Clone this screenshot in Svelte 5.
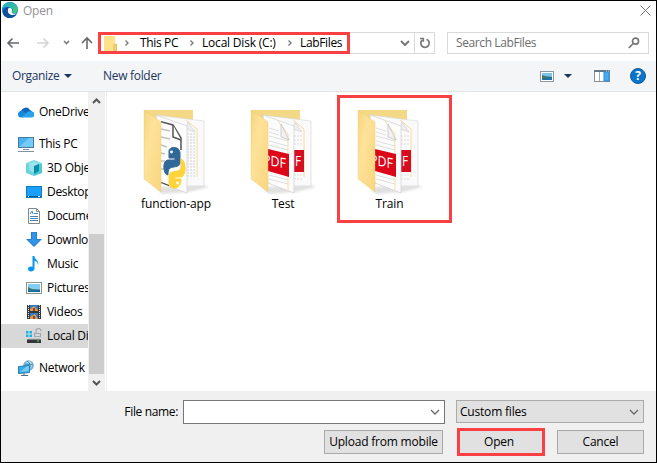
<script>
  const places = [
    { icon: 'onedrive', label: 'OneDrive', top: true },
    { icon: 'pc', label: 'This PC', top: true, gap: true },
    { icon: 'cube', label: '3D Objects' },
    { icon: 'desktop', label: 'Desktop' },
    { icon: 'document', label: 'Documents' },
    { icon: 'download', label: 'Downloads' },
    { icon: 'music', label: 'Music' },
    { icon: 'picture', label: 'Pictures' },
    { icon: 'video', label: 'Videos' },
    { icon: 'disk', label: 'Local Disk', selected: true },
    { icon: 'network', label: 'Network', top: true, gap: true }
  ];
  const crumbs = ['This PC', 'Local Disk (C:)', 'LabFiles'];
  const folders = [
    { name: 'function-app', kind: 'python' },
    { name: 'Test', kind: 'pdf' },
    { name: 'Train', kind: 'pdf', marked: true }
  ];
</script>

{#snippet placeIcon(name)}
  <svg class="pi" viewBox="0 0 16 16">
    {#if name === 'onedrive'}
      <path d="M3 7a5 5 0 0 1 9-1 4 4 0 0 1 2 6L4 9z" fill="#0f68be" />
      <path d="M0 10a3.500 3.500 0 0 1 5-3l7 5-9 1.500A3.300 3.300 0 0 1 0 10z" fill="#1787d9" />
      <path d="M3 13.500 10 7.500a4 4 0 0 1 3 0 3 3 0 0 1 1 6z" fill="#29a4ea" />
    {:else if name === 'pc'}
      <rect x=".5" y="1.500" width="15" height="10" fill="#48b3ed" stroke="#477b9f" />
      <path d="M1 11 11 2h4v9z" fill="#75cbf7" />
      <path d="M5 13.500h6M0 15.500h16" stroke="#7f93a5" />
    {:else if name === 'cube'}
      <path d="M0 3 8 0l8 3-8 3z" fill="#84dce5" />
      <path d="m0 3 8 3v10l-8-3z" fill="#6cd3de" />
      <path d="m16 3-8 3v10l8-3z" fill="#4fc8d6" />
      <path d="m3 4 5-2 5 2-5 2v7l-5-3z" fill="#b3eff3" opacity=".55" />
      <path d="m8 6 5-2v7l-5 3z" fill="#078da6" />
    {:else if name === 'desktop'}
      <rect x=".5" y="2.500" width="15" height="11" fill="#18a0fb" stroke="#147bc2" />
      <path d="M1 12.500h14" stroke="#075e9d" /><path d="M2 12.500h1m9 0h2" stroke="#fff" />
    {:else if name === 'document'}
      <path d="M2.500.5h8l3 3v12h-11z" fill="#fff" stroke="#85898c" /><path d="M10.500.5v3h3" fill="none" stroke="#85898c" />
      <path d="m4 6 2-3 1 3m1-.5h4m-8 3h8m-8 2h8m-8 2h8" fill="none" stroke="#398bc8" /><path d="M8 8.500h4m-4 4h4" stroke="#65727b" />
    {:else if name === 'download'}
      <path d="M5 0h6v7h5l-8 8-8-8h5z" fill="#3294e6" /><path d="M5.500 0h5v7.500h4.300L8 14.200 1.200 7.500h4.300z" fill="none" stroke="#1979ca" stroke-width=".7" />
    {:else if name === 'music'}
      <path d="M6.500 0h2c0 4 5 4 3.500 9-.2-3-1.500-3.700-3.500-4v7.500C8.500 16 2 16.500 2 13c0-2.500 3-3 4.500-2z" fill="#0997ee" />
    {:else if name === 'picture'}
      <rect x=".5" y="2.500" width="15" height="11" fill="#fff" stroke="#8b949a" /><path d="M2 4h12v8H2z" fill="#82cdf0" /><path d="m2 7 4 2 8 .5V12H2z" fill="#367b7c" /><path d="m2 11 12-1v2H2z" fill="#1468a6" />
    {:else if name === 'video'}
      <path d="M1 1h14v14H1z" fill="#35393d" /><path d="M4 1h8v6H4zm0 8h8v6H4z" fill="#327dc6" /><path d="M4 5 8 2l4 4v1H4zm0 8 5-3 3 5H4z" fill="#df9b42" /><path d="M7 4h2v3H7zm0 8h2v3H7z" fill="#8d4240" /><path d="M2.500 1v14m11-14v14" stroke="#eee" stroke-dasharray="1 1" />
    {:else if name === 'disk'}
      <path d="M0 3h2.500v2.500H0zm3.500 0H6v2.500H3.500zM0 6.500h2.500V9H0zm3.500 0H6V9H3.500z" fill="#14b4e9" /><path d="M3 10h10l2 1.500H1z" fill="#c1c5c7" /><rect x="1" y="11.500" width="14" height="3.500" fill="#343739" /><path d="M11 13h2" stroke="#54e264" /><path d="M10 5V3a2.500 2.500 0 0 1 5 0M8.500 5.500h6v3h-6z" fill="none" stroke="#a0a9ae" stroke-width="1.200" />
    {:else}
      <circle cx="10.500" cy="5.500" r="5.300" fill="#76add0" /><path d="m7 2 5-1 3 4-3 4-1-5z" fill="#b6dfed" /><path d="M9 1c4 2 4 7 1 9M6 6c3-2 6-2 9-1" fill="none" stroke="#3b87b9" /><path d="M.5 6.500 11.500 5.500v7L.5 13.500z" fill="#39ace5" stroke="#287faf" /><path d="M2 12 9 6h2v5z" fill="#74caf4" /><path d="M6 13v2M3 15.500h7" stroke="#506b82" />
    {/if}
  </svg>
{/snippet}

{#snippet chevron()}<svg class="chev" viewBox="0 0 6 6"><path d="m1.500.5 2.500 2.500-2.500 2.500" /></svg>{/snippet}
{#snippet down()}<svg class="down" viewBox="0 0 10 6"><path d="m1 1 4 4 4-4" /></svg>{/snippet}

<div class="dialog">
  <header>
    <svg width="16" height="16" viewBox="0 0 16 16">
      <defs><linearGradient id="edge" x2="1" y2="1"><stop stop-color="#22a9dd" /><stop offset="1" stop-color="#47ce69" /></linearGradient></defs>
      <circle cx="8" cy="8" r="8" fill="#0875c9" /><path d="M0 7C1-1 14-3 16 7c0 5-5 5-6 3 3-4-5-8-10-3z" fill="url(#edge)" /><path d="M6 5c-7 1-7 9 0 11 4 .5 7-2 8.500-4C10 14 5 11 6 7z" fill="#104f9a" /><path d="M6 8c0-4 5-2 4 1-1 2 1 4 5 2l-1 1C9 15 5 11 6 8z" fill="#fff" />
    </svg>
    <span>Open</span>
    <svg class="close" width="11" height="11" viewBox="0 0 11 11"><path d="m.5.5 10 10m0-10-10 10" /></svg>
  </header>

  <nav class="address-row">
    <div class="arrows">
      <svg width="86" height="14" viewBox="0 0 86 14" fill="none" stroke-width="1.600">
        <path d="M13 7H2m4.500-4.500L2 7l4.500 4.500" stroke="#66696c" /><path d="M31 7h11m-4.500-4.500L42 7l-4.500 4.500" stroke="#d5d5d5" /><path d="m58 5 2.500 2.500L63 5" stroke="#77797b" /><path d="M81 13V2m-5 5 5-5 5 5" stroke="#66696c" />
      </svg>
    </div>
    <div class="address">
      <div class="crumbs">
        <svg class="mini-folder" viewBox="0 0 14 16"><path d="M0 1h11v8l2 1v6H0z" fill="#ffe18b" /><path d="M11 9h1.500v6.500H10V10z" fill="#f8d272" stroke="#dfb64f" stroke-width=".7" /></svg>
        {#each crumbs as crumb, i}
          <span class="sep">{@render chevron()}</span><span class="crumb c{i}">{crumb}</span>
        {/each}
      </div>
      <span class="history">{@render down()}</span>
      <span class="refresh"><svg width="12" height="12" viewBox="0 0 12 12"><path d="M7.500 2.200A4.200 4.200 0 1 1 3 3.200M1 1.500h3.300v3.300" /></svg></span>
    </div>
    <div class="search"><span>Search LabFiles</span><svg width="12" height="12" viewBox="0 0 12 12"><circle cx="7.500" cy="4.200" r="3" /><path d="M5.200 6.500.8 11" /></svg></div>
  </nav>

  <div class="toolbar">
    <span class="organize">Organize</span><i class="tri"></i><span class="newfolder">New folder</span>
    <svg class="view" width="14" height="11" viewBox="0 0 14 11"><rect x=".5" y=".5" width="13" height="10" fill="#fff" stroke="#8c99a3" /><path d="M2 2h10v7H2z" fill="#79c5ef" /><path d="m2 4 3 1 7 1v3H2z" fill="#40786d" /><path d="m2 8 10-2v3H2z" fill="#206eaa" /></svg>
    <i class="tri second"></i>
    <svg class="pane" width="16" height="12" viewBox="0 0 16 12"><rect x=".5" y=".5" width="15" height="11" fill="#fff" stroke="#8b9095" /><path d="M0 1h16" stroke="#657785" stroke-width="2" /><path d="M5.500 2v9" stroke="#a4a9ad" /><path d="M10 2h5v9h-5z" fill="#4aaaf1" stroke="#268bd8" /><path d="M12 1h1m1 0h1" stroke="#bee1ff" /></svg>
    <span class="help">?</span>
  </div>

  <main>
    <aside>
      {#each places as place}
        <div class="place" class:top={place.top} class:gap={place.gap} class:selected={place.selected}>
          {@render placeIcon(place.icon)}<span>{place.label}</span>
        </div>
      {/each}
    </aside>
    <div class="scrollbar">
      <svg width="9" height="6" viewBox="0 0 9 6"><path d="m1 5 3.500-3.500L8 5" /></svg>
      <div class="thumb"></div>
      <svg class="end" width="9" height="6" viewBox="0 0 9 6"><path d="m1 1 3.500 3.500L8 1" /></svg>
    </div>
    <section>
      {#each folders as folder, i}
        <div class="file" class:marked={folder.marked}>
          <svg width="76" height="88" viewBox="0 0 76 88">
            <defs>
              <linearGradient id="flap{i}" x2="1" y2="1"><stop stop-color="#f2d57d" /><stop offset=".35" stop-color="#ffe29a" /><stop offset="1" stop-color="#f8d67e" /></linearGradient>
              <filter id="soft{i}"><feGaussianBlur stdDeviation="1" /></filter>
              <clipPath id="front{i}"><path d="M18 10 44 18v67L18 75z" /></clipPath>
            </defs>
            <path d="m12 79 48-2 6 2-20 5-27 2z" fill="#777" opacity=".22" filter="url(#soft{i})" />
            <path d="M1 2h49v74H18L1 66z" fill="#f3d886" />
            <path d="m13 7 48 6v65H34z" fill="#fafafa" stroke="#d5d5d5" stroke-width=".6" />
            <path d="m43 12 11 9v48" fill="none" stroke="#f4d585" stroke-width=".8" />
            <path d="m45 14 7 10-9-3z" fill="#eee" stroke="#ccc" stroke-width=".6" />
            {#if folder.kind === 'python'}
              <path d="M44 26h8m-8 3h8m-8 3h8m-8 3h8m-8 3h8m-8 3h8m-8 3h8m-8 3h8m-8 3h8m-8 3h8m-8 3h8m-8 3h8m-8 3h8m-8 3h8m-8 3h8" stroke="#d2d2d2" stroke-dasharray="2 1" />
            {:else}
              <path d="M44 28h8m-8 4h8m-8 4h8m-8 31h8m-8 4h8" stroke="#ddd" stroke-dasharray="2 1" />
              <path d="M44 42h10v22H44z" fill="#d60d20" /><text x="45" y="58" class="pdf" textLength="6" lengthAdjust="spacingAndGlyphs">F</text>
            {/if}
            <path d="m13 7 31 11v67L18 75z" fill="#fcfcfc" stroke="#d0d0d0" stroke-width=".7" />
            {#if folder.kind === 'python'}
              <g clip-path="url(#front{i})">
                <path d="m15 13 15 4 8 13v12" fill="none" stroke="#555" stroke-width="1.500" /><path d="m30 17v12l8 3" fill="#fff" stroke="#555" stroke-width="1.500" />
                <path d="m18 21 9 2m-9 6 9 2m-9 6 6 2m-6 6 4 1m-4 7h4m-4 8h5" stroke="#c2c2c2" stroke-width="1.500" /><path d="m18 75 8 3" stroke="#444" stroke-width="2" />
              </g>
              <path d="M26 43c0-5 11-5 11 2v10c0 5-9 3-11 6-1 2-1 6-1 6-5 0-6-15 0-15h7v-2h-6z" fill="#306998" stroke="#306998" />
              <path d="M38 51c5 1 6 17 0 18h-6v2h6c0 12-12 11-12 4v-7c0-7 12-2 12-9z" fill="#ffd43b" stroke="#ffd43b" />
              <circle cx="28.500" cy="44" r="1.400" fill="#fff" /><circle cx="34.500" cy="75" r="1.400" fill="#fff" />
            {:else}
              <path d="m19 20 10 3m-10 1 10 3m-10 1 19 5m-19 0 19 5m-19-1 19 5m-19 25 19 5m-19-1 19 5" stroke="#d6d6d6" stroke-width=".8" />
              <path d="m28 13 10 13v56" fill="none" stroke="#eed180" stroke-width=".7" /><path d="m31 16 8 16-8-3z" fill="#f1f1f1" stroke="#bbb" stroke-width=".7" />
              <path d="m18 41 21 5v23l-21-6z" fill="#dc0718" />
              <g clip-path="url(#front{i})"><text x="13" y="57" class="pdf front" textLength="23" lengthAdjust="spacingAndGlyphs">PDF</text></g>
            {/if}
            <path d="M1 2 18 14v70L1 71z" fill="url(#flap{i})" stroke="#eccb70" stroke-width=".4" />
          </svg>
          <span>{folder.name}</span>
        </div>
      {/each}
    </section>
  </main>

  <footer>
    <div class="fields"><span class="fn">File name:</span><div class="input">{@render down()}</div><div class="select"><span>Custom files</span>{@render down()}</div></div>
    <div class="buttons"><button class="upload">Upload from mobile</button><button class="open">Open</button><button class="cancel">Cancel</button></div>
  </footer>
</div>

<style>
  :global(body) { margin: 0; }
  * { box-sizing: border-box; }
  .dialog { width: 657px; height: 463px; border: 1px solid #000; display: flex; flex-direction: column; background: #fff; color: #000; font: 12px/16px "Open Sans", "Noto Sans", sans-serif; letter-spacing: -.25px; overflow: hidden; white-space: nowrap; }
  svg { display: block; flex: none; }
  header { height: 31px; display: flex; padding: 1px 5px 0 1px; color: #929292; }
  header span { margin: 1px 0 0 5px; }
  .close { margin: 3px 0 0 auto; fill: none; stroke: #777; }
  .address-row { height: 22px; display: flex; }
  .arrows { width: 97px; padding: 4px 0 0 5px; }
  .arrows svg { overflow: visible; }
  .address { width: 337px; border: 1px solid #d9d9d9; display: flex; }
  .crumbs { width: 252px; height: 22px; margin: -1px 0 0 -1px; border: 3px solid #f94144; display: flex; align-items: center; flex: none; letter-spacing: -.35px; }
  .mini-folder { width: 14px; height: 16px; margin-left: 3px; }
  .sep { width: 6px; margin-left: 6px; }
  .chev { width: 6px; height: 6px; fill: none; stroke: #777; stroke-width: 1.300; }
  .crumb { margin: 0 0 0 11px; }
  .c0 { width: 39px; margin-right: 4px; margin-left: 10px; }
  .c1 { width: 75px; margin-right: 4px; margin-left: 7px; letter-spacing: -.2px; }
  .c2 { margin-left: 7px; }
  .history { display: flex; align-items: center; padding-left: 50px; width: 64px; }
  .down { width: 10px; height: 6px; fill: none; stroke: #666; stroke-width: 1.300; }
  .history .down { stroke: #777; stroke-width: 2; }
  .refresh { flex: 1; border-left: 1px solid #d9d9d9; display: grid; place-items: center; }
  .refresh svg, .search svg { fill: none; stroke: #777; stroke-width: 1.700; }
  .search { margin-left: 12px; width: 202px; border: 1px solid #d9d9d9; display: flex; align-items: center; justify-content: space-between; padding: 0 8px; color: #6d6d6d; letter-spacing: -.4px; }
  .toolbar { height: 31px; margin-top: 7px; background: #f4f5f7; border-bottom: 1px solid #e3e3e4; display: flex; align-items: center; color: #1c355e; }
  .organize { width: 48px; margin-left: 11px; letter-spacing: -.35px; }
  .tri { border: 4px solid transparent; border-top-color: #1c355e; border-bottom: 0; margin-left: 4px; }
  .newfolder { margin-left: 31px; letter-spacing: -.3px; }
  .view { margin-left: auto; }
  .tri.second { margin-left: 10px; }
  .pane { margin-left: 22px; }
  .help { width: 16px; height: 16px; margin: 0 10px 0 20px; border-radius: 50%; background: #0874ce; border: 1px solid #155991; color: #fff; font-weight: bold; text-align: center; line-height: 14px; }
  main { height: 299px; display: flex; }
  aside { width: 87px; overflow: hidden; padding-top: 8px; }
  .place { height: 24px; padding-left: 25px; display: flex; align-items: center; }
  .place.top { padding-left: 17px; }
  .place.gap { margin-top: 8px; }
  .place span { margin-left: 5px; letter-spacing: -.3px; }
  .place.selected { background: #d8d8d8; }
  .pi { width: 16px; height: 16px; }
  .scrollbar { width: 17px; background: #f0f0f0; display: flex; flex-direction: column; align-items: center; padding: 6px 0 5px; }
  .scrollbar svg { fill: none; stroke: #565656; stroke-width: 2; }
  .thumb { width: 15px; height: 140px; margin-top: 130px; background: #cdcdcd; }
  .scrollbar .end { margin-top: auto; }
  section { flex: 1; border-left: 1px solid #eee; margin-left: 1px; padding: 3px 0 0 16px; display: flex; }
  .file { width: 107px; height: 128px; display: flex; flex-direction: column; align-items: center; padding-top: 13px; }
  .file > svg { margin-left: 9px; }
  .file > span { line-height: 16px; letter-spacing: -.15px; margin-right: 1px; }
  .file.marked { width: 115px; border: 3px solid #f94144; padding: 10px 9px 0 0; }
  .pdf { font: 14px "Open Sans", sans-serif; fill: #fff; letter-spacing: 0; }
  .front { transform: skewY(10deg) translateY(-3px); }
  footer { flex: 1; background: #f0f0f0; padding: 9px 12px 0 0; }
  .fields { display: flex; height: 24px; }
  .fn { width: 182px; padding: 4px 5px 0 0; text-align: right; letter-spacing: -.35px; }
  .input { width: 262px; border: 1px solid #777; background: #fff; display: flex; align-items: center; justify-content: flex-end; padding-right: 4px; }
  .select { width: 188px; height: 23px; margin-left: 11px; border: 1px solid #aaa; background: #e1e1e1; display: flex; align-items: center; justify-content: space-between; padding: 0 4px 0 3px; letter-spacing: -.2px; }
  .buttons { display: flex; align-items: flex-start; padding: 6px 0 0 323px; }
  button { height: 24px; margin: 0; padding: 0; border: 1px solid #aaa; background: #e1e1e1; color: inherit; font: inherit; letter-spacing: -.2px; }
  .upload { width: 119px; }
  .open { width: 88px; height: 28px; margin: -2px 0 0 14px; border: 3px solid #f94144; padding-right: 4px; }
  .cancel { width: 87px; margin-left: 12px; }
</style>
